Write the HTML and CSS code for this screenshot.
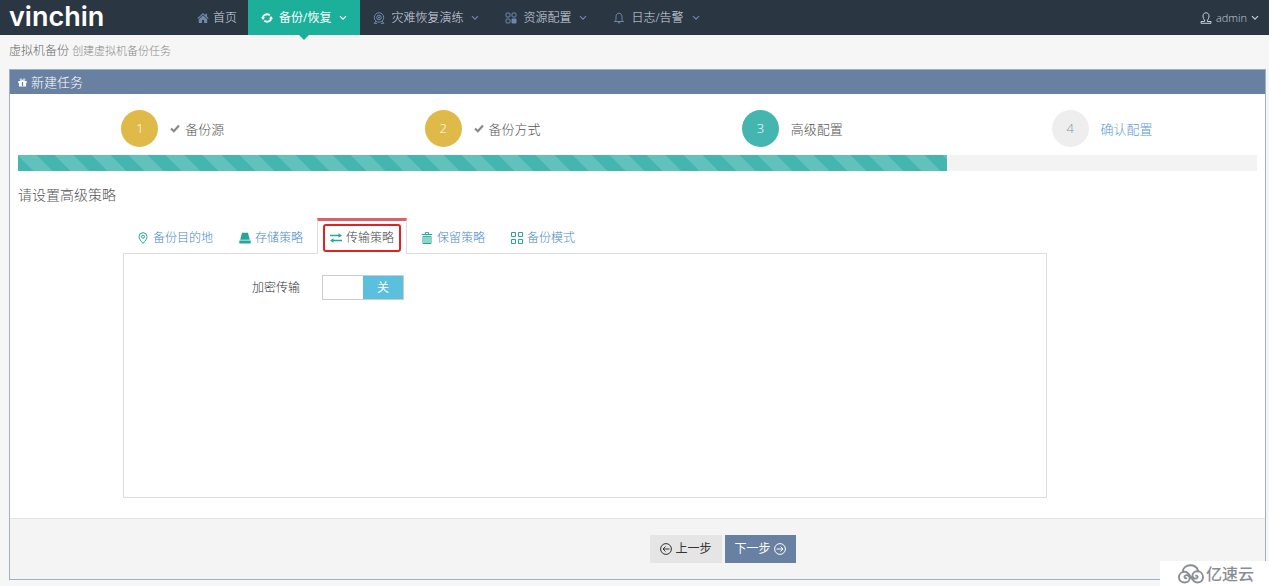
FILE: index.html
```html
<!DOCTYPE html>
<html lang="zh-CN">
<head>
<meta charset="utf-8">
<title>虚拟机备份</title>
<link rel="stylesheet" href="styles.css">
</head>
<body>
<svg class="defs" width="0" height="0" aria-hidden="true">
  <symbol id="chevron" viewBox="0 0 8 6"><path d="M1 1.2 4 4.2 7 1.2" fill="none" stroke="currentColor" stroke-width="1.2"/></symbol>
  <symbol id="check" viewBox="0 0 10 9"><path d="M1 4.6 3.8 7.3 9 1.5" fill="none" stroke="currentColor" stroke-width="2.1"/></symbol>
</svg>
<header class="topbar">
  <a class="logo" href="#">vinchin</a>
  <nav class="menu">
    <a class="menu-item" href="#">
      <svg class="icon" viewBox="0 0 12 12"><path d="M6 1 .3 6.200l.8.8L6 2.600l4.900 4.400.8-.8-1.700-1.600V1.800H8.400v1.400zM6 3.400 1.800 7.200V11h3.200V8h2v3h3.200V7.200z" fill="currentColor"/></svg>
      <span>首页</span>
    </a>
    <a class="menu-item active" href="#">
      <svg class="icon" viewBox="0 0 12 12"><path d="M1.600 6A4.400 4 0 0 1 8.800 3.200M10.400 6A4.400 4 0 0 1 3.200 8.800" fill="none" stroke="currentColor" stroke-width="1.800"/><path d="M0 5.200h4L2 8zM12 6.800H8L10 4z" fill="currentColor"/></svg>
      <span>备份/恢复</span>
      <svg class="chevron"><use href="#chevron"/></svg>
    </a>
    <a class="menu-item" href="#">
      <svg class="icon" viewBox="0 0 12 12"><g fill="none" stroke="currentColor"><circle cx="6" cy="5.500" r="4.700"/><circle cx="6" cy="5.500" r="2.300"/><path d="M3 9 1.200 11.400H4M9 9l1.800 2.400H8"/></g><circle cx="6" cy="5.500" r="1" fill="currentColor"/></svg>
      <span>灾难恢复演练</span>
      <svg class="chevron"><use href="#chevron"/></svg>
    </a>
    <a class="menu-item" href="#">
      <svg class="icon" viewBox="0 0 12 12"><g fill="none" stroke="currentColor"><rect x="1" y="1" width="4" height="4" rx="1"/><rect x="7" y="1" width="4" height="4" rx="1"/><rect x="1" y="7" width="4" height="4" rx="1"/></g><rect x="6.500" y="6.500" width="5" height="5" rx="1" fill="currentColor"/></svg>
      <span>资源配置</span>
      <svg class="chevron"><use href="#chevron"/></svg>
    </a>
    <a class="menu-item" href="#">
      <svg class="icon" viewBox="0 0 12 12"><path d="M1.200 9.500h9.600M2.300 9.300C3.200 8 3 6.500 3 4.800 3 2.500 4.300 1.200 6 1.200s3 1.300 3 3.600c0 1.700-.2 3.200.7 4.500M4.800 10.800h2.400" fill="none" stroke="currentColor"/></svg>
      <span>日志/告警</span>
      <svg class="chevron"><use href="#chevron"/></svg>
    </a>
  </nav>
  <a class="user" href="#">
    <svg class="icon" viewBox="0 0 12 12"><path d="M1 11.300V9.500h3.600V8C3.400 7 3 5.500 3 4c0-2 1.200-3.200 3-3.200S9 2 9 4c0 1.500-.4 3-1.600 4v1.500H11v1.800z" fill="none" stroke="currentColor"/></svg>
    <span>admin</span>
    <svg class="chevron"><use href="#chevron"/></svg>
  </a>
</header>

<h1 class="page-title">虚拟机备份 <small>创建虚拟机备份任务</small></h1>

<main class="panel">
  <h2 class="panel-head">
    <svg class="gift" viewBox="0 0 10 10"><path d="M.3 3.200h9.400v2.300H.3zM1 5.500h8v4H1z" fill="currentColor"/><path d="M5 3C2.500 3 1.800 2.400 2.300 1.500S4.500 1.100 5 3c.5-1.900 2.200-2.400 2.700-1.500S7.500 3 5 3z" fill="none" stroke="currentColor"/><path d="M4.300 4.500h1.400V9H4.300z" fill="#6880a1"/></svg>
    <span>新建任务</span>
  </h2>
  <div class="panel-body">
    <ol class="steps">
      <li><a class="step done" href="#"><span class="num">1</span><svg class="check"><use href="#check"/></svg><span>备份源</span></a></li>
      <li><a class="step done" href="#"><span class="num">2</span><svg class="check"><use href="#check"/></svg><span>备份方式</span></a></li>
      <li><a class="step current" href="#"><span class="num">3</span><span>高级配置</span></a></li>
      <li><a class="step" href="#"><span class="num">4</span><span>确认配置</span></a></li>
    </ol>
    <div class="progress"><div class="bar" style="width:75%"></div></div>
    <h3 class="hint">请设置高级策略</h3>
    <section class="strategy">
      <nav class="tabs">
        <a class="tab" href="#"><svg class="icon" viewBox="0 0 12 12"><path d="M6 11.400C3.600 8.600 2 6.700 2 4.700a4 4 0 0 1 8 0c0 2-1.600 3.900-4 6.700z" fill="none" stroke="currentColor"/><circle cx="6" cy="4.700" r="1.500" fill="none" stroke="currentColor"/></svg><span>备份目的地</span></a>
        <a class="tab" href="#"><svg class="icon" viewBox="0 0 12 12"><path d="M3 .8h6l1.800 7H1.200zM.3 8.600h11.400v2.900H.3z" fill="currentColor"/></svg><span>存储策略</span></a>
        <a class="tab active" href="#"><svg class="icon" viewBox="0 0 12 12"><path d="M0 3.500h9M12 8.500H3" fill="none" stroke="currentColor" stroke-width="1.600"/><path d="M8.500 1.200 12 3.500 8.500 5.800zM3.500 6.200 0 8.500l3.500 2.300z" fill="currentColor"/></svg><span>传输策略</span></a>
        <a class="tab" href="#"><svg class="icon" viewBox="0 0 12 12"><path d="M.8 2.500h10.400M4.300 2.200V.6h3.400v1.600M2 4.300h8v7.200H2zM4 4.500v7M6 4.500v7M8 4.500v7" fill="none" stroke="currentColor"/></svg><span>保留策略</span></a>
        <a class="tab" href="#"><svg class="icon" viewBox="0 0 12 12"><path d="M.5.500h4v4h-4zM7.500.500h4v4h-4zM.5 7.500h4v4h-4zM7.500 7.500h4v4h-4z" fill="none" stroke="currentColor"/></svg><span>备份模式</span></a>
      </nav>
      <div class="tab-body">
        <div class="field">
          <label for="encrypt">加密传输</label>
          <span class="switch"><input type="checkbox" id="encrypt"><span class="off">关</span></span>
        </div>
      </div>
    </section>
  </div>
  <footer class="actions">
    <button class="btn" type="button"><svg class="icon" viewBox="0 0 12 12"><path d="M9.500 6H3M5.500 3.500 3 6l2.500 2.500" fill="none" stroke="currentColor"/><circle cx="6" cy="6" r="5.400" fill="none" stroke="currentColor"/></svg>上一步</button>
    <button class="btn primary" type="button">下一步<svg class="icon" viewBox="0 0 12 12"><path d="M2.500 6H9M6.500 3.500 9 6 6.500 8.500" fill="none" stroke="currentColor"/><circle cx="6" cy="6" r="5.400" fill="none" stroke="currentColor"/></svg></button>
  </footer>
</main>

<div class="watermark">
  <svg viewBox="0 0 26 20"><g fill="none" stroke="currentColor" stroke-width="1.900" stroke-linecap="round"><path d="M4.800 8C4.800 4 8 1.300 12.200 1.300c4 0 6.800 2 7.800 5.300"/><path d="M8.200 14.300c-1.800.2-2.500-1.900-.9-2.800 2-1 4.400.4 4.400 2.800 0 2.600-2.200 4.200-4.900 4.200-3.400 0-5.800-2.300-5.800-5.300 0-3.100 2.500-5.400 5.800-5.400 5.800 0 6.200 10.700 12.400 10.700 3.400 0 5.800-2.300 5.800-5.500 0-3.500-2.600-5.700-5.700-5.700-3 0-4.900 2.100-4.900 4.300 0 2.300 2.500 3.700 4.400 2.700 1.500-.9.800-2.900-.8-2.700"/></g></svg>
  <span>亿速云</span>
</div>
</body>
</html>
```

FILE: styles.css
```css
* { box-sizing: border-box; }
body {
  margin: 0;
  min-height: 100vh;
  background: #f6f6f6;
  color: #555;
  font: 300 12px/16px "Open Sans", "Noto Sans CJK SC", sans-serif;
}
a { color: inherit; text-decoration: none; }
h1, h2, h3, ol { margin: 0; padding: 0; font-weight: 300; }
.defs { position: absolute; }
.icon { width: 12px; height: 12px; flex: none; }
.chevron { width: 8px; height: 6px; flex: none; }

.topbar {
  display: flex;
  height: 35px;
  background: #2b3643;
  color: #c6cfda;
}
.logo {
  width: 187px;
  padding-left: 9px;
  color: #fff;
  font: 600 27px/33px Inter, sans-serif;
}
.menu { display: flex; flex: 1; }
.menu-item, .user {
  display: flex;
  align-items: center;
  gap: 6px;
  padding: 0 13px;
}
.menu-item { color: #d3dae2; }
.menu-item:first-child { padding: 0 11px 0 10px; gap: 4px; }
.menu-item .icon, .menu-item .chevron { color: #6f88aa; }
.menu-item .chevron { margin-left: 2px; }
.menu-item.active { position: relative; background: #1caf9a; color: #fff; font-weight: 400; }
.menu-item.active .icon, .menu-item.active .chevron { color: #fff; }
.menu-item.active::after {
  content: "";
  position: absolute;
  top: 100%;
  left: 50%;
  margin-left: -5px;
  border: 5px solid transparent;
  border-top-color: #1caf9a;
  border-bottom: 0;
}
.user { font-size: 11px; padding: 0 10px; gap: 4px; }

.page-title { padding: 6px 9px 9px; font-size: 12px; line-height: 19px; color: #666; }
.page-title small { font-size: 11px; color: #888; }

.panel { margin: 0 3px 0 9px; border: 1px solid #9fb0c4; background: #fff; }
.panel-head {
  display: flex;
  align-items: center;
  gap: 4px;
  padding: 0 8px;
  background: #6880a1;
  color: #fff;
  font-size: 13px;
  line-height: 24px;
}
.gift { width: 9px; height: 9px; }
.panel-body { padding: 16px 8px 20px; }

.steps { display: grid; grid-template-columns: repeat(4, 1fr); list-style: none; }
.steps li { display: flex; justify-content: center; }
.step { display: flex; align-items: center; color: #5b9bd1; font-size: 13px; }
.num {
  width: 37px;
  margin-right: 12px;
  border-radius: 50%;
  background: #eee;
  color: #7c93b2;
  line-height: 37px;
  text-align: center;
}
.check { width: 10px; height: 9px; margin-right: 5px; color: #888; }
.done, .current { color: #555; }
.done .num { background: #dfba49; color: #fff; }
.current .num { background: #45b6af; color: #fff; }

.progress { height: 16px; margin-top: 8px; background: #f3f3f3; }
.bar {
  height: 100%;
  background: #45b6af linear-gradient(45deg, #ffffff26 25%, transparent 25%, transparent 50%, #ffffff26 50%, #ffffff26 75%, transparent 75%) 0 0 / 37px 37px;
}
.hint { margin-top: 14px; font-size: 14px; line-height: 20px; }

.strategy { margin: 13px 210px 0 105px; }
.tabs { display: flex; gap: 2px; padding-left: 2px; }
.tab {
  display: flex;
  align-items: center;
  gap: 4px;
  height: 36px;
  padding: 0 12px;
  border-top: 3px solid transparent;
  color: #4688c4;
}
.tab .icon { color: #26a69a; }
.tab.active {
  position: relative;
  z-index: 1;
  border: 1px solid #ddd;
  border-top: 3px solid #e0606a;
  border-bottom: 0;
  background: #fff;
  color: #444;
}
.tab.active::after {
  content: "";
  position: absolute;
  inset: 3px 5px 2px;
  border: 2px solid #e02222;
  border-radius: 3px;
}
.tab-body { min-height: 245px; margin-top: -1px; padding: 21px 128px; border: 1px solid #ddd; }
.field { display: flex; align-items: center; gap: 22px; color: #333; }
.switch { display: flex; width: 82px; height: 25px; border: 1px solid #ccc; }
.switch input { flex: 1; min-width: 0; margin: 0; appearance: none; background: #fff; }
.off { flex: 1; background: #5bc0de; color: #fff; line-height: 23px; text-align: center; font-weight: 400; }

.actions {
  display: flex;
  justify-content: center;
  gap: 3px;
  padding: 16px 0;
  padding-left: 171px;
  border-top: 1px solid #e5e5e5;
  background: #f4f4f4;
}
.btn {
  display: flex;
  align-items: center;
  gap: 3px;
  height: 28px;
  padding: 0 10px;
  border: 0;
  background: #e5e5e5;
  color: #333;
  font: inherit;
  font-weight: 400;
}
.btn.primary { background: #6880a1; color: #fff; }

.watermark {
  position: fixed;
  right: 0;
  bottom: 0;
  display: flex;
  align-items: center;
  gap: 2px;
  height: 25px;
  width: 109px;
  padding-left: 18px;
  background: #fff;
  color: #8a8d94;
  font-size: 16px;
  font-weight: 500;
}
.watermark svg { width: 26px; height: 20px; }
```
